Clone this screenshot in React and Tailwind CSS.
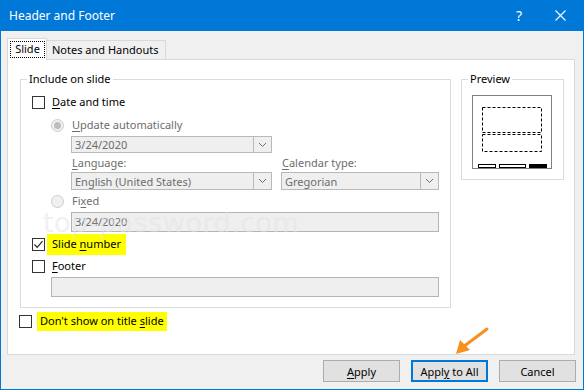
import React from "react";

const F = { fontFamily: '"Noto Sans", "DejaVu Sans", sans-serif' };

function U({ children }) {
  return <span className="underline underline-offset-[2px]">{children}</span>;
}

function Checkbox({ checked }) {
  return (
    <div className="w-[13px] h-[13px] border border-[#333333] bg-white flex items-center justify-center shrink-0">
      {checked && (
        <svg width="11" height="11" viewBox="0 0 11 11">
          <path d="M1.5 5.5 L4.2 8.3 L9.5 2.2" fill="none" stroke="#222" strokeWidth="1.2" />
        </svg>
      )}
    </div>
  );
}

function Radio({ checked }) {
  return (
    <div className="w-[13px] h-[13px] rounded-full border border-[#cccccc] bg-[#f0f0f0] flex items-center justify-center shrink-0">
      {checked && <div className="w-[7px] h-[7px] rounded-full bg-[#bdbdbd]" />}
    </div>
  );
}

function Chevron() {
  return (
    <svg width="9" height="6" viewBox="0 0 9 6">
      <path d="M1 1 L4.5 4.5 L8 1" fill="none" stroke="#6d6d6d" strokeWidth="1" />
    </svg>
  );
}

function Combo({ value, w, h }) {
  return (
    <div className={`flex border border-[#b9b9b9] bg-[#efefef] ${w} ${h}`}>
      <div className="flex-1 flex items-center pl-[3px] text-[#6d6d6d] leading-none">{value}</div>
      <div className="w-[18px] border-l border-[#b9b9b9] flex items-center justify-center">
        <Chevron />
      </div>
    </div>
  );
}

function Btn({ children, primary }) {
  return (
    <div
      className={`w-[77px] h-[22px] flex items-center justify-center bg-[#e1e1e1] leading-none ${
        primary ? "border-2 border-[#0078d7]" : "border border-[#adadad]"
      }`}
    >
      {children}
    </div>
  );
}

export default function App() {
  return (
    <div
      className="relative w-[584px] h-[390px] flex flex-col bg-[#f0f0f0] border-l border-r border-b border-[#0078d7] text-[11px] text-black overflow-hidden"
      style={F}
    >
      {/* Title bar */}
      <div className="h-[31px] bg-[#0078d7] flex items-center text-white shrink-0">
        <div className="pl-[8px] text-[12px] flex-1">Header and Footer</div>
        <div className="w-[20px] text-[14px] text-center mr-[26px]">?</div>
        <svg width="11" height="11" viewBox="0 0 11 11" className="mr-[17px]">
          <path d="M0.5 0.5 L10.5 10.5 M10.5 0.5 L0.5 10.5" stroke="white" strokeWidth="1.1" />
        </svg>
      </div>

      {/* Body */}
      <div className="flex-1 flex flex-col pl-[6px] pt-[7px]">
        {/* Tabs */}
        <div className="flex items-end h-[21px] relative z-10">
          <div className="w-[40px] h-[22px] border border-b-0 border-[#d9d9d9] bg-white flex pl-[2px] pt-[2px] -mb-px">
            <div className="h-[17px] w-[35px] border border-dotted border-black flex items-center justify-center">
              Slide
            </div>
          </div>
          <div className="w-[119px] h-[19px] border-t border-r border-[#d9d9d9] bg-[#f0f0f0] flex items-center pl-[5px]">
            Notes and Handouts
          </div>
        </div>

        {/* Panel */}
        <div className="w-[568px] h-[296px] border border-[#d9d9d9] bg-white flex flex-col pl-[12px] pt-[19px]">
          <div className="flex gap-[10px]">
            {/* Include on slide group */}
            <div className="relative w-[431px] h-[229px] border border-[#dcdcdc] flex flex-col">
              <div className="absolute left-[6px] top-[-9px] bg-white px-[2px] leading-[16px]">Include on slide</div>

              <div className="mt-[12px] h-[20px] flex items-center pl-[11px] gap-[7px]">
                <Checkbox />
                <span><U>D</U>ate and time</span>
              </div>

              <div className="mt-[3px] h-[20px] flex items-center pl-[30px] gap-[8px] text-[#6d6d6d]">
                <Radio checked />
                <span><U>U</U>pdate automatically</span>
              </div>

              <div className="mt-[1px] pl-[50px]">
                <Combo value="3/24/2020" w="w-[201px]" h="h-[17px]" />
              </div>

              <div className="mt-[2px] h-[16px] flex items-center pl-[51px] text-[#6d6d6d]">
                <span className="w-[210px]"><U>L</U>anguage:</span>
                <span><U>C</U>alendar type:</span>
              </div>

              <div className="mt-[1px] pl-[50px] flex gap-[9px]">
                <Combo value="English (United States)" w="w-[201px]" h="h-[18px]" />
                <Combo value="Gregorian" w="w-[158px]" h="h-[18px]" />
              </div>

              <div className="mt-[1px] h-[20px] flex items-center pl-[30px] gap-[8px] text-[#6d6d6d]">
                <Radio />
                <span>Fi<U>x</U>ed</span>
              </div>

              <div className="mt-[1px] pl-[50px]">
                <div className="w-[368px] h-[20px] border border-[#b4b4b4] bg-[#efefef] flex items-center pl-[3px] text-[#6d6d6d]">
                  3/24/2020
                </div>
              </div>

              <div className="mt-[2px] h-[21px] flex items-center pl-[11px]">
                <Checkbox checked />
                <div className="ml-[2px] h-[21px] bg-[#ffff00] flex items-center px-[5px]">
                  <span>Slide <U>n</U>umber</span>
                </div>
              </div>

              <div className="mt-[1px] h-[20px] flex items-center pl-[11px] gap-[7px]">
                <Checkbox />
                <span><U>F</U>ooter</span>
              </div>

              <div className="mt-[1px] pl-[30px]">
                <div className="w-[388px] h-[20px] border border-[#b4b4b4] bg-[#efefef]" />
              </div>
            </div>

            {/* Preview group */}
            <div className="relative w-[103px] h-[101px] border border-[#dcdcdc] pl-[10px] pt-[15px]">
              <div className="absolute left-[6px] top-[-9px] bg-white px-[2px] leading-[16px]">Preview</div>
              <svg width="80" height="74" viewBox="0 0 80 74">
                <rect x="0.5" y="0.5" width="79" height="73" fill="white" stroke="#808080" />
                <rect x="10.5" y="12.5" width="59" height="25" fill="none" stroke="black" strokeDasharray="3 2" />
                <rect x="10.5" y="39.5" width="59" height="17" fill="none" stroke="black" strokeDasharray="3 2" />
                <rect x="6.5" y="69.5" width="17" height="3" fill="white" stroke="black" />
                <rect x="27.5" y="69.5" width="26" height="3" fill="white" stroke="black" />
                <rect x="57" y="69" width="18" height="4" fill="black" />
              </svg>
            </div>
          </div>

          {/* Don't show on title slide */}
          <div className="mt-[4px] h-[19px] flex items-center -ml-[1px]">
            <Checkbox />
            <div className="ml-[5px] h-[19px] bg-[#ffff00] flex items-center px-[3px]">
              <span>Don't show on title <U>s</U>lide</span>
            </div>
          </div>
        </div>

        {/* Buttons */}
        <div className="mt-[5px] flex justify-end gap-[11px] pr-[7px]">
          <Btn><span><U>A</U>pply</span></Btn>
          <Btn primary><span>Appl<U>y</U> to All</span></Btn>
          <Btn>Cancel</Btn>
        </div>
      </div>

      {/* Watermark */}
      <div
        className="absolute left-[42px] top-[203px] text-[27px] font-medium text-[#e4e4e4] opacity-50 pointer-events-none tracking-[0.5px]"
        style={{ fontFamily: '"DejaVu Sans", sans-serif' }}
      >
        top-password.com
      </div>

      {/* Orange arrow */}
      <svg className="absolute left-[448px] top-[325px]" width="44" height="34" viewBox="0 0 44 34">
        <path d="M38 4 L14 22" stroke="#f7901e" strokeWidth="3" strokeLinecap="round" />
        <path d="M7 29 L11 15 L21 25 Z" fill="#f7901e" />
      </svg>
    </div>
  );
}
